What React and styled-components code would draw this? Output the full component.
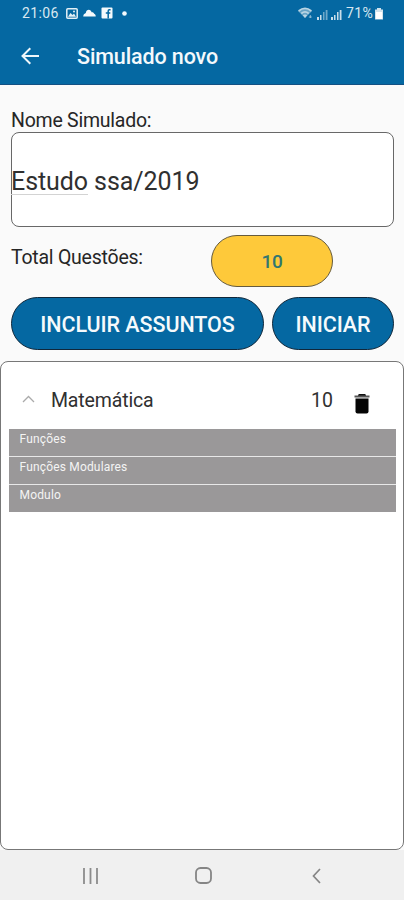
import styled, { createGlobalStyle } from "styled-components"

const GlobalStyle = createGlobalStyle`
         * {
             box-sizing: border-box;
         }
         body {
             margin: 0;
             background: #fafafa;
             font-family: Roboto, "Liberation Sans", sans-serif;
         }
`
const Screen = styled.div`
         width: 404px;
         height: 900px;
         display: flex;
         flex-direction: column;
         overflow: hidden;
         background: #fafafa;
`
const Header = styled.header`
         height: 85px;
         flex: none;
         background: #0568a2;
         border-bottom: 1px solid #135083;
         color: #f4f9fc;
`
const StatusBar = styled.div`
         height: 27px;
         padding: 0 20px 0 22px;
         display: flex;
         justify-content: space-between;
         align-items: center;
         color: #d9e8f1;
`
const StatusGroup = styled.div`
         display: flex;
         align-items: center;
         height: 27px;
`
const StatusText = styled.span`
         font-size: 14px;
         line-height: 27px;
         margin-left: ${(props) => props.$left || 0}px;
         letter-spacing: ${(props) => props.$spacing || "0"};
`
const Icon = styled.svg`
         display: block;
         flex: none;
         margin-top: ${(props) => props.$top || 0}px;
         margin-left: ${(props) => props.$left || 0}px;
`
const TitleBar = styled.div`
         height: 57px;
         padding-left: 21px;
         display: flex;
         align-items: center;
`
const Title = styled.h1`
         margin: 2px 0 0 37px;
         font-size: 21.5px;
         line-height: 26px;
         font-weight: 500;
         letter-spacing: -0.12px;
`
const Form = styled.main`
         padding: 22px 10px 0 11px;
         height: 276px;
         flex: none;
`
const Label = styled.label`
         display: block;
         height: 26px;
         margin-top: ${(props) => props.$top || 0}px;
         font-size: 19.5px;
         line-height: 28px;
         color: #262626;
         letter-spacing: -0.24px;
`
const NameField = styled.div`
         height: 95px;
         margin-top: -1px;
         padding-top: 3px;
         border: 1px solid #686868;
         border-radius: 8px;
         background: white;
         display: flex;
         align-items: center;
         font-size: 25px;
         color: #303030;
         white-space: pre;
         letter-spacing: -0.08px;
`
const Spelling = styled.span`
         line-height: 24px;
         border-bottom: 1px solid #d3d3d3;
         margin: 3px 0 0 -1px;
`
const TotalRow = styled.div`
         display: flex;
         justify-content: space-between;
         margin-top: 8px;
         padding-right: 61px;
`
const Pill = styled.button`
         height: ${(props) => props.$height}px;
         width: ${(props) => props.$width}px;
         padding: 1px 0 0;
         border: 1px solid ${(props) => (props.$yellow ? "#655b3e" : "#10273a")};
         border-radius: 27px;
         background: ${(props) => (props.$yellow ? "#fec93a" : "#0568a2")};
         color: ${(props) => (props.$yellow ? "#327670" : "#f5fafc")};
         font-family: inherit;
         font-size: ${(props) => (props.$yellow ? 19 : 21.5)}px;
         font-weight: 500;
         letter-spacing: ${(props) => (props.$yellow ? "-0.4px" : "-0.07px")};
`
const Actions = styled.div`
         display: flex;
         justify-content: space-between;
         margin-top: 10px;
`
const Card = styled.section`
         height: 489px;
         flex: none;
         border: 1px solid #777;
         border-radius: 8px;
         background: white;
         padding: 0 7px 0 8px;
`
const Subject = styled.div`
         height: 67px;
         display: flex;
         align-items: center;
         padding: 9px 26px 0 13px;
         font-size: 19.5px;
         color: #303030;
`
const SubjectName = styled.span`
         flex: 1;
         margin-left: 16px;
         letter-spacing: -0.15px;
`
const Topics = styled.ul`
         list-style: none;
         margin: 0;
         padding: 0;
         display: grid;
         gap: 1px;
         background: #e8e8e8;
`
const Topic = styled.li`
         height: 27px;
         padding-left: 10.5px;
         background: #9a9899;
         color: #f4f4f4;
         font-size: 12px;
         line-height: 21px;
         letter-spacing: 0.17px;
`
const BottomBar = styled.nav`
         height: 50px;
         flex: none;
         display: flex;
         align-items: center;
         background: #f0f0f0;
         padding: 1px 0 0 80px;
`

const topics = ["Funções", "Funções Modulares", "Modulo"]

function Signal({ left, dim }) {
    return (
        <Icon $left={left} $top={1} width="12" height="11" viewBox="0 0 12 11" fill="#c9deea">
            <path d="M1 8h2v3H1zM4 6h1.5v5H4z" />
            <path d="M7 3h1.5v8H7zM9.7 1h1.8v10H9.7z" opacity={dim ? 0.55 : 1} />
        </Icon>
    )
}

function Status() {
    return (
        <StatusBar>
            <StatusGroup>
                <StatusText $spacing="0.4px">21:06</StatusText>
                <Icon $left={7} width="12" height="11" viewBox="0 0 12 11">
                    <rect x=".8" y=".8" width="10.4" height="9.4" rx="1" fill="none" stroke="#e4f0f6" strokeWidth="1.5" />
                    <path d="M2 8.7 4.5 5l2 2 1.5-1.5 2 3.2z" fill="#e4f0f6" />
                    <circle cx="8" cy="3.5" r="1" fill="#e4f0f6" />
                </Icon>
                <Icon $left={5} $top={-1} width="13" height="8" viewBox="0 0 13 8" fill="#f4f9fc">
                    <path d="M.3 7.6Q-.2 5 2.8 4C3.2-.3 8-.2 8.6 3.2c1.5-.2 2.2.4 2.6 1.5 1.3.4 1.6 1.8 1.5 2.9z" />
                </Icon>
                <Icon $left={5} $top={-1} width="12" height="12" viewBox="0 0 12 12">
                    <rect x=".5" y=".5" width="11" height="11" rx="1" fill="#f4f9fc" />
                    <path d="M9.6 2.7H8.3Q7.2 2.7 7.2 4v7.5M4.8 6h4.5" fill="none" stroke="#0568a2" strokeWidth="1.5" />
                </Icon>
                <Icon $left={9} width="5" height="5" viewBox="0 0 5 5">
                    <circle cx="2.5" cy="2.5" r="2.3" fill="#f4f9fc" />
                </Icon>
            </StatusGroup>
            <StatusGroup>
                <Icon $top={-2} width="15" height="12" viewBox="0 0 15 12" fill="none" stroke="#b9d5e4" strokeWidth="2.1">
                    <path d="M0 4Q7-1.2 14 4L7 11z" fill="#b9d5e4" opacity=".55" stroke="none" />
                    <path d="M.6 4Q7-1.2 13.4 4M3.3 6.5Q7 3.4 10.7 6.5" strokeWidth="1.7" />
                    <path d="m4.8 8.3 2.2 2.7 2.2-2.7q-2.2-1.5-4.4 0z" fill="#b9d5e4" stroke="none" />
                    <path d="M12.3 8v3M10.8 10h3" strokeWidth=".7" />
                </Icon>
                <Signal left={3} dim />
                <Signal left={2} />
                <StatusText $left={4} $spacing="0.35px">71%</StatusText>
                <Icon $left={1} $top={1} width="10" height="12" viewBox="0 0 10 12">
                    <path d="M3 0h4v1.5h2v10H1v-10h2z" fill="#d2e3ed" />
                    <path d="M2 4h6v7H2z" fill="#fff" />
                </Icon>
            </StatusGroup>
        </StatusBar>
    )
}

function App() {
    return (
        <>
            <GlobalStyle />
            <Screen>
                <Header>
                    <Status />
                    <TitleBar>
                        <Icon width="19" height="18" viewBox="0 0 19 18" fill="none" stroke="#eef6fa" strokeWidth="2">
                            <path d="M18 9H2M9.3 1.2 1.5 9l7.8 7.8" />
                        </Icon>
                        <Title>Simulado novo</Title>
                    </TitleBar>
                </Header>

                <Form>
                    <Label>Nome Simulado:</Label>
                    <NameField><Spelling>Estudo</Spelling> ssa/2019</NameField>
                    <TotalRow>
                        <Label as="span" $top={9}>Total Questões:</Label>
                        <Pill $yellow $width={122} $height={52}>10</Pill>
                    </TotalRow>
                    <Actions>
                        <Pill $width={253} $height={53}>INCLUIR ASSUNTOS</Pill>
                        <Pill $width={122} $height={53}>INICIAR</Pill>
                    </Actions>
                </Form>

                <Card>
                    <Subject>
                        <Icon $top={-3} width="13" height="8" viewBox="0 0 13 8" fill="none" stroke="#aaa" strokeWidth="1.3">
                            <path d="m1 7 5.5-5.5L12 7" />
                        </Icon>
                        <SubjectName>Matemática</SubjectName>
                        <span>10</span>
                        <Icon $left={21} $top={7} width="16" height="20" viewBox="0 0 16 20">
                            <path d="M5 0h6l1 1.5h3.5v2H.5v-2H4z" fill="#555" />
                            <path d="M5 0h6l1 1.5H4z" fill="#111" />
                            <path d="M1.5 4.5h13v13q0 2-2 2h-9q-2 0-2-2z" fill="#050505" />
                        </Icon>
                    </Subject>
                    <Topics>
                        {topics.map((topic) => (
                            <Topic key={topic}>{topic}</Topic>
                        ))}
                    </Topics>
                </Card>

                <BottomBar>
                    <Icon $left={2} width="17" height="16" viewBox="0 0 17 16" stroke="#8c8c8c" strokeWidth="1.8">
                        <path d="M2 0v16M8.5 0v16M15 0v16" />
                    </Icon>
                    <Icon $left={96} width="17" height="17" viewBox="0 0 17 17" fill="none" stroke="#858585" strokeWidth="1.8">
                        <rect x="1" y="1" width="15" height="15" rx="4.5" />
                    </Icon>
                    <Icon $left={100} width="9" height="16" viewBox="0 0 9 16" fill="none" stroke="#858585" strokeWidth="1.7">
                        <path d="M8 1 1.5 8 8 15" />
                    </Icon>
                </BottomBar>
            </Screen>
        </>
    )
}

export default App
